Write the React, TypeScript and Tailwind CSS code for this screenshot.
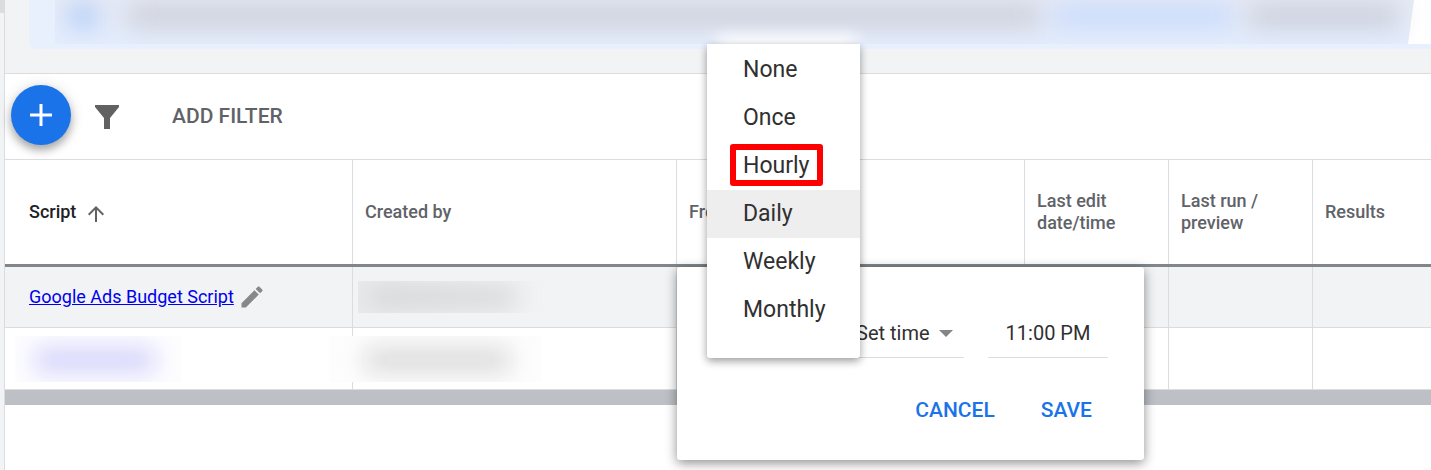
import { useState } from "react";

const FREQUENCIES = ["None", "Once", "Hourly", "Daily", "Weekly", "Monthly"];

function AddIcon() {
  return (
    <svg aria-hidden="true" className="size-9" fill="currentColor" viewBox="0 0 24 24">
      <path d="M19.3 13h-6.3v6.3h-2v-6.3H4.7v-2h6.3V4.7h2v6.3h6.3z" />
    </svg>
  );
}

function FilterIcon() {
  return (
    <svg aria-hidden="true" className="size-6" fill="currentColor" viewBox="0 0 24 24">
      <path d="M0 0h24v2l-9 11v11H9V13L0 2z" />
    </svg>
  );
}

function ArrowUpIcon() {
  return (
    <svg aria-hidden="true" className="size-6" fill="currentColor" viewBox="0 0 24 24">
      <path d="M4 12l1.41 1.41L11 7.83V20h2V7.83l5.58 5.59L20 12l-8-8-8 8z" />
    </svg>
  );
}

function EditIcon() {
  return (
    <svg aria-hidden="true" className="size-7" fill="currentColor" viewBox="0 0 24 24">
      <path d="M3 17.25V21h3.75L17.81 9.94l-3.75-3.75L3 17.25zM20.71 7.04a1 1 0 0 0 0-1.41l-2.34-2.34a1 1 0 0 0-1.41 0l-1.83 1.83 3.75 3.75 1.83-1.83z" />
    </svg>
  );
}

function Notice() {
  return (
    <div className="h-[74px] border-b border-[#dadce0] bg-[#f1f3f4] pl-6">
      <div className="relative h-[49px] overflow-hidden rounded-bl-lg bg-[#e8f0fe]">
        <div className="absolute inset-x-0 top-0 ml-[26px] flex h-11 overflow-hidden bg-linear-to-b from-[#e7ebf6] to-[#e4edfd]">
          <div className="ml-3 mt-1 h-6 w-8 shrink-0 rounded-full bg-[#aecbf8] blur-md" />
          <div className="ml-7 mt-1 h-6 flex-1 bg-[#cdd0db] blur-md" />
          <div className="ml-3 mt-1 h-6 w-[180px] shrink-0 bg-[#c9dbfc] blur-md" />
          <div className="ml-4 mt-1 h-6 w-[150px] shrink-0 bg-[#cbcfdb] blur-md" />
          <svg aria-hidden="true" className="h-11 w-8 shrink-0" viewBox="0 0 32 44">
            <path d="M15 0h17v44H9z" fill="#fff" />
          </svg>
          <div className="absolute top-9 left-[662px] h-6 w-[140px] bg-white blur-sm" />
        </div>
      </div>
    </div>
  );
}

function Toolbar() {
  return (
    <div className="flex h-[86px] items-center border-b border-[#dadce0] pb-1 pl-1.5">
      <button
        aria-label="New script"
        className="flex size-[60px] items-center justify-center rounded-full bg-[#1a73e8] text-white shadow-[0_5px_8px_rgba(0,0,0,0.3),0_1px_16px_rgba(0,0,0,0.12)]"
        type="button"
      >
        <AddIcon />
      </button>
      <div className="flex items-center pt-1 pl-6">
        <button aria-label="Filter" className="text-[#616161]" type="button">
          <FilterIcon />
        </button>
        <button className="ml-[53px] text-[21px] font-medium text-[#5f6368]" type="button">
          ADD FILTER
        </button>
      </div>
    </div>
  );
}

function FrequencyMenu() {
  const [selected, setSelected] = useState("Daily");

  return (
    <ul
      aria-label="Frequency"
      className="absolute bottom-0 left-0 z-20 w-[153px] rounded-b-[3px] bg-white pt-0.5 pb-6 shadow-[0_3px_8px_rgba(0,0,0,0.4)]"
    >
      {FREQUENCIES.map((frequency) => (
        <li className="relative" key={frequency}>
          <button
            aria-pressed={frequency === selected}
            className="block h-12 w-full pl-9 text-left text-[23px] text-[#303030] aria-pressed:bg-[#eeeeee]"
            onClick={() => setSelected(frequency)}
            type="button"
          >
            {frequency}
          </button>
          {frequency === "Hourly" ? (
            <div className="pointer-events-none absolute top-0.5 left-[23px] h-[42px] w-[93px] rounded-[3px] border-6 border-[#ff0000]" />
          ) : null}
        </li>
      ))}
    </ul>
  );
}

function ScheduleDialog() {
  const [time, setTime] = useState("11:00 PM");

  return (
    <div
      aria-label="Schedule"
      className="absolute top-0 left-0 z-10 w-[467px] rounded-[3px] bg-white pt-[43px] pr-9 pb-[30px] pl-[30px] shadow-[0_3px_12px_rgba(0,0,0,0.45)]"
      role="dialog"
    >
      <div className="flex h-12 text-[20px] text-[#303030]">
        <div className="relative flex-1">
          <FrequencyMenu />
        </div>
        <div className="relative w-[108px] border-b border-[#dadce0]">
          <select
            aria-label="Run time"
            className="h-full w-full appearance-none bg-transparent pb-0.5"
            defaultValue="set"
          >
            <option value="set">Set time</option>
          </select>
          <svg
            aria-hidden="true"
            className="pointer-events-none absolute top-5 right-[11px] h-[7px] w-[14px]"
            viewBox="0 0 14 7"
          >
            <path d="M0 0h14L7 7z" fill="#858585" />
          </svg>
        </div>
        <input
          aria-label="Time"
          className="ml-6 w-[120px] border-b border-[#dadce0] pb-0.5 text-center"
          onChange={(e) => setTime(e.target.value)}
          type="text"
          value={time}
        />
      </div>
      <div className="mt-8 flex h-10 items-center justify-end gap-[46px] pr-4 text-[21px] font-medium text-[#1a73e8]">
        <button type="button">CANCEL</button>
        <button type="button">SAVE</button>
      </div>
    </div>
  );
}

function ScriptsTable() {
  return (
    <table className="w-full table-fixed border-separate border-spacing-0 text-left text-[18px] leading-[22px]">
      <colgroup>
        <col className="w-[348px]" />
        <col className="w-[324px]" />
        <col className="w-[348px]" />
        <col className="w-[144px]" />
        <col className="w-[144px]" />
        <col />
      </colgroup>
      <thead>
        <tr className="h-[104px] text-[#5f6368] *:border-[#dadce0] *:font-medium">
          <th className="border-r pl-6 text-[#202124]">
            <span className="flex items-center gap-2">
              Script
              <span className="pt-1 text-[#616161]">
                <ArrowUpIcon />
              </span>
            </span>
          </th>
          <th className="border-r pl-3">Created by</th>
          <th className="border-r pl-3">Frequency</th>
          <th className="border-r pl-3">
            Last edit
            <br />
            date/time
          </th>
          <th className="border-r pl-3">
            Last run /
            <br />
            preview
          </th>
          <th className="pl-3">Results</th>
        </tr>
        <tr aria-hidden="true">
          <td className="h-[3px] bg-[#80868b]" colSpan={6} />
        </tr>
      </thead>
      <tbody>
        <tr className="h-[61px] bg-[#f1f3f4] *:border-b *:border-[#dadce0]">
          <td className="border-r pl-6">
            <div className="flex items-center gap-1">
              <a className="text-[#0000ee] underline" href="#script">
                Google Ads Budget Script
              </a>
              <button aria-label="Edit script" className="text-[#888888]" type="button">
                <EditIcon />
              </button>
            </div>
          </td>
          <td className="border-r pl-[5px]">
            <div className="h-8 w-[190px] overflow-hidden bg-linear-to-r from-[#e9eaeb] to-[#f1f3f4]">
              <div className="mx-3 mt-2 h-4 w-[145px] bg-[#cfd0d2] blur-md" />
            </div>
          </td>
          <td className="relative border-r">
            <ScheduleDialog />
          </td>
          <td className="border-r" />
          <td className="border-r" />
          <td />
        </tr>
        <tr className="h-[62px] *:border-b *:border-[#dadce0]">
          <td className="border-r pl-[10px]">
            <div className="h-[46px] w-[166px] overflow-hidden bg-[#fdfdff]">
              <div className="mt-3 ml-5 h-6 w-[120px] bg-[#d3d2fb] blur-md" />
            </div>
          </td>
          <td className="border-r">
            <div className="relative -ml-6 h-[46px] w-[212px] overflow-hidden bg-[#fdfdfd]">
              <div className="mt-3 ml-9 h-6 w-[145px] bg-[#dadada] blur-md" />
            </div>
          </td>
          <td className="border-r" />
          <td className="border-r" />
          <td className="border-r" />
          <td />
        </tr>
      </tbody>
    </table>
  );
}

export default function App() {
  return (
    <div className="flex min-h-screen bg-white font-[Roboto,sans-serif]">
      <div className="w-[5px] shrink-0 border-r border-[#dadce0] bg-[#f1f3f4]">
        <div className="h-[13px] bg-[#dadce0]" />
      </div>
      <main className="min-w-0 flex-1">
        <Notice />
        <Toolbar />
        <ScriptsTable />
        <div className="h-[15px] bg-[#bdc1c6]" />
      </main>
    </div>
  );
}
